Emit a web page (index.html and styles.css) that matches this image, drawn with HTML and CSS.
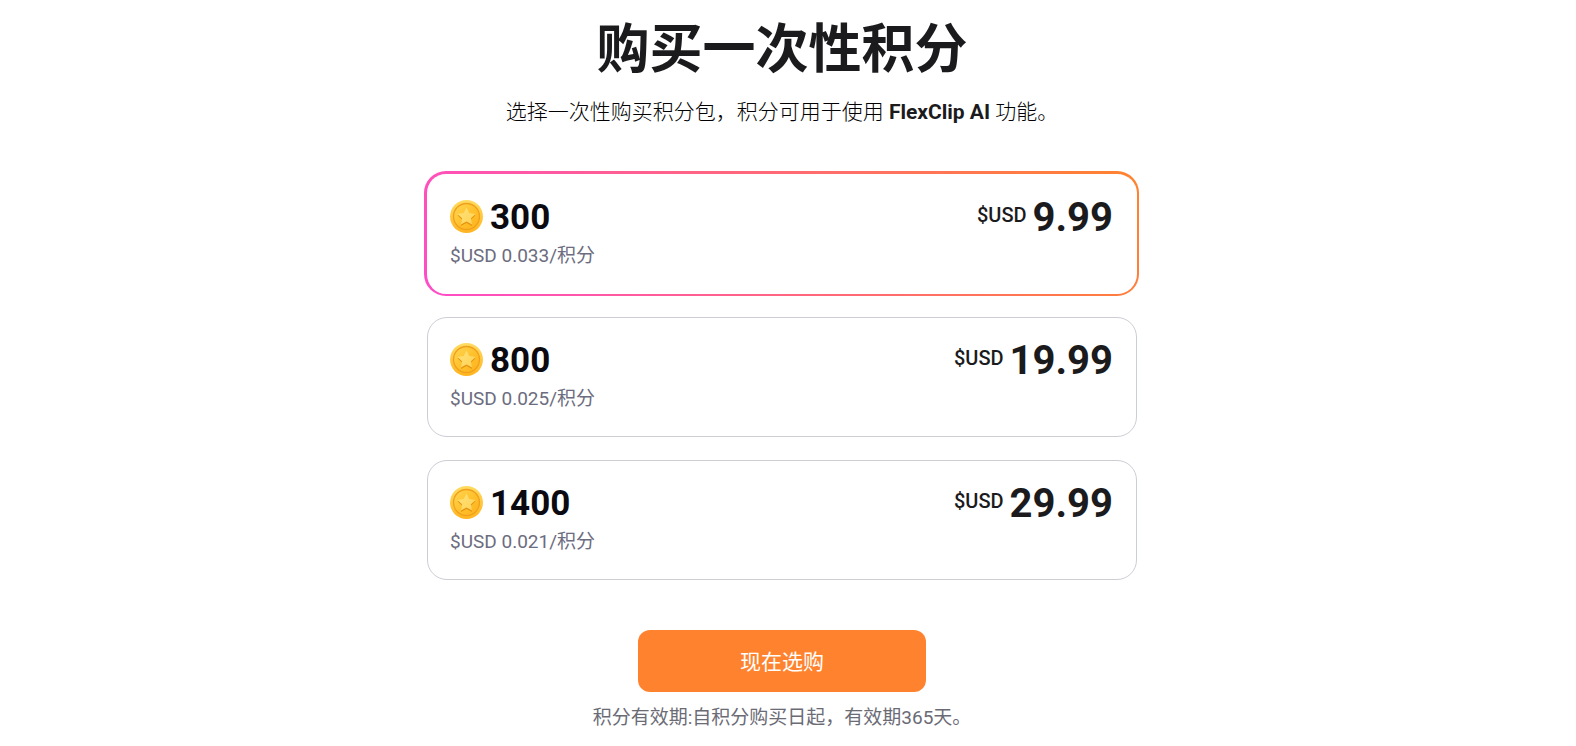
FILE: index.html
```html
<!DOCTYPE html>
<html lang="zh-CN">
<head>
  <meta charset="UTF-8">
  <meta name="viewport" content="width=device-width, initial-scale=1.0">
  <title>购买一次性积分 - FlexClip</title>
  <link rel="stylesheet" href="styles.css">
</head>
<body>
  <!-- Coin icon shared by all packs -->
  <svg class="sprite" aria-hidden="true">
    <defs>
      <linearGradient id="coinRim" x1="0" y1="0" x2="0" y2="1">
        <stop offset="0" stop-color="#ffdc62"></stop>
        <stop offset="1" stop-color="#ffb41f"></stop>
      </linearGradient>
      <linearGradient id="coinFace" x1="0" y1="0" x2="1" y2="1">
        <stop offset="0" stop-color="#ffd654"></stop>
        <stop offset="0.5" stop-color="#ffc22e"></stop>
        <stop offset="1" stop-color="#ffb01a"></stop>
      </linearGradient>
      <linearGradient id="coinStar" x1="0" y1="0" x2="1" y2="1">
        <stop offset="0" stop-color="#ffe277"></stop>
        <stop offset="1" stop-color="#ffd257"></stop>
      </linearGradient>
    </defs>
    <symbol id="coin" viewBox="0 0 33 33">
      <circle cx="16.5" cy="16.5" r="16.5" fill="url(#coinRim)"></circle>
      <circle cx="16.5" cy="16.5" r="13" fill="url(#coinFace)" stroke="#f0a01c" stroke-width="1.3"></circle>
      <path d="M16.5 8.8l2.8 5.6 6.2.9-4.5 4.4 1.1 6.2-5.6-3-5.6 3 1.1-6.2-4.5-4.4 6.2-.9z" fill="#e6930f"></path>
      <path d="M16.5 7.4l2.8 5.6 6.2.9-4.5 4.4 1.1 6.2-5.6-3-5.6 3 1.1-6.2-4.5-4.4 6.2-.9z" fill="url(#coinStar)"></path>
    </symbol>
  </svg>

  <main>
    <h1>购买一次性积分</h1>
    <p class="intro">选择一次性购买积分包，积分可用于使用 <strong>FlexClip AI</strong> 功能。</p>

    <form class="buy-form">
      <div class="packs" role="radiogroup" aria-label="积分包">
        <label class="pack">
          <input type="radio" name="pack" value="300" checked>
          <span class="pack-info">
            <span class="credits"><svg class="coin" aria-hidden="true"><use href="#coin"></use></svg>300</span>
            <span class="unit-price">$USD 0.033/积分</span>
          </span>
          <span class="price"><span class="currency">$USD</span><span class="amount">9.99</span></span>
        </label>
        <label class="pack">
          <input type="radio" name="pack" value="800">
          <span class="pack-info">
            <span class="credits"><svg class="coin" aria-hidden="true"><use href="#coin"></use></svg>800</span>
            <span class="unit-price">$USD 0.025/积分</span>
          </span>
          <span class="price"><span class="currency">$USD</span><span class="amount">19.99</span></span>
        </label>
        <label class="pack">
          <input type="radio" name="pack" value="1400">
          <span class="pack-info">
            <span class="credits"><svg class="coin" aria-hidden="true"><use href="#coin"></use></svg>1400</span>
            <span class="unit-price">$USD 0.021/积分</span>
          </span>
          <span class="price"><span class="currency">$USD</span><span class="amount">29.99</span></span>
        </label>
      </div>

      <button type="button" class="buy-button">现在选购</button>
      <p class="note">积分有效期:自积分购买日起，有效期365天。</p>
    </form>
  </main>
</body>
</html>
```

FILE: styles.css
```css
* {
  margin: 0;
  padding: 0;
  box-sizing: border-box;
}

body {
  font-family: Roboto, 'Noto Sans CJK SC', sans-serif;
  background-color: #fff;
  color: #1b1b1d;
}

.sprite {
  position: absolute;
  width: 0;
  height: 0;
}

main {
  padding: 18px 12px 16px 0;
  text-align: center;
}

h1 {
  font-size: 53px;
  line-height: 64px;
  font-weight: 700;
}

.intro {
  margin-top: 14px;
  font-size: 21px;
  line-height: 32px;
  font-weight: 300;
  color: #000;
}

.intro strong {
  font-weight: 700;
  color: #1b1b1d;
}

.buy-form {
  max-width: 710px;
  margin: 46px auto 0;
}

.packs {
  display: flex;
  flex-direction: column;
  gap: 23px;
}

.pack {
  display: flex;
  justify-content: space-between;
  align-items: flex-start;
  padding: 22px 23px 23px 22px;
  border: 1px solid #cdcdd6;
  border-radius: 20px;
  text-align: left;
  cursor: pointer;
}

.pack input {
  position: absolute;
  opacity: 0;
}

/* Gradient ring sits outside the normal card edge */
.pack:has(input:checked) {
  margin: -3px -2px -2px -3px;
  padding: 23px 24px 24px 23px;
  border-width: 3px 2px 2px 3px;
  border-color: transparent;
  border-radius: 22px;
  background:
    linear-gradient(#fff, #fff) padding-box,
    linear-gradient(60deg, #ff4bc8, #ff832e) border-box;
}

.pack-info {
  display: flex;
  flex-direction: column;
  gap: 2px;
}

.credits {
  display: flex;
  align-items: flex-start;
  gap: 7px;
  font-size: 35px;
  line-height: 42px;
  font-weight: 700;
  color: #0a0a10;
}

.coin {
  width: 33px;
  height: 33px;
  margin-top: 3px;
}

.unit-price {
  font-size: 19px;
  line-height: 29px;
  color: #6c6c80;
}

.price {
  display: flex;
  gap: 6px;
  line-height: 42px;
}

.currency {
  font-size: 20px;
  line-height: 36px;
  font-weight: 500;
}

.amount {
  font-size: 40px;
  font-weight: 700;
}

.buy-button {
  display: block;
  width: 288px;
  height: 62px;
  margin: 50px auto 0;
  padding-bottom: 2px;
  border: none;
  border-radius: 12px;
  background-color: #ff832e;
  color: #fff;
  font-family: inherit;
  font-size: 21px;
  cursor: pointer;
}

.note {
  margin-top: 11px;
  font-size: 19px;
  line-height: 29px;
  color: #6b6b76;
}
```
